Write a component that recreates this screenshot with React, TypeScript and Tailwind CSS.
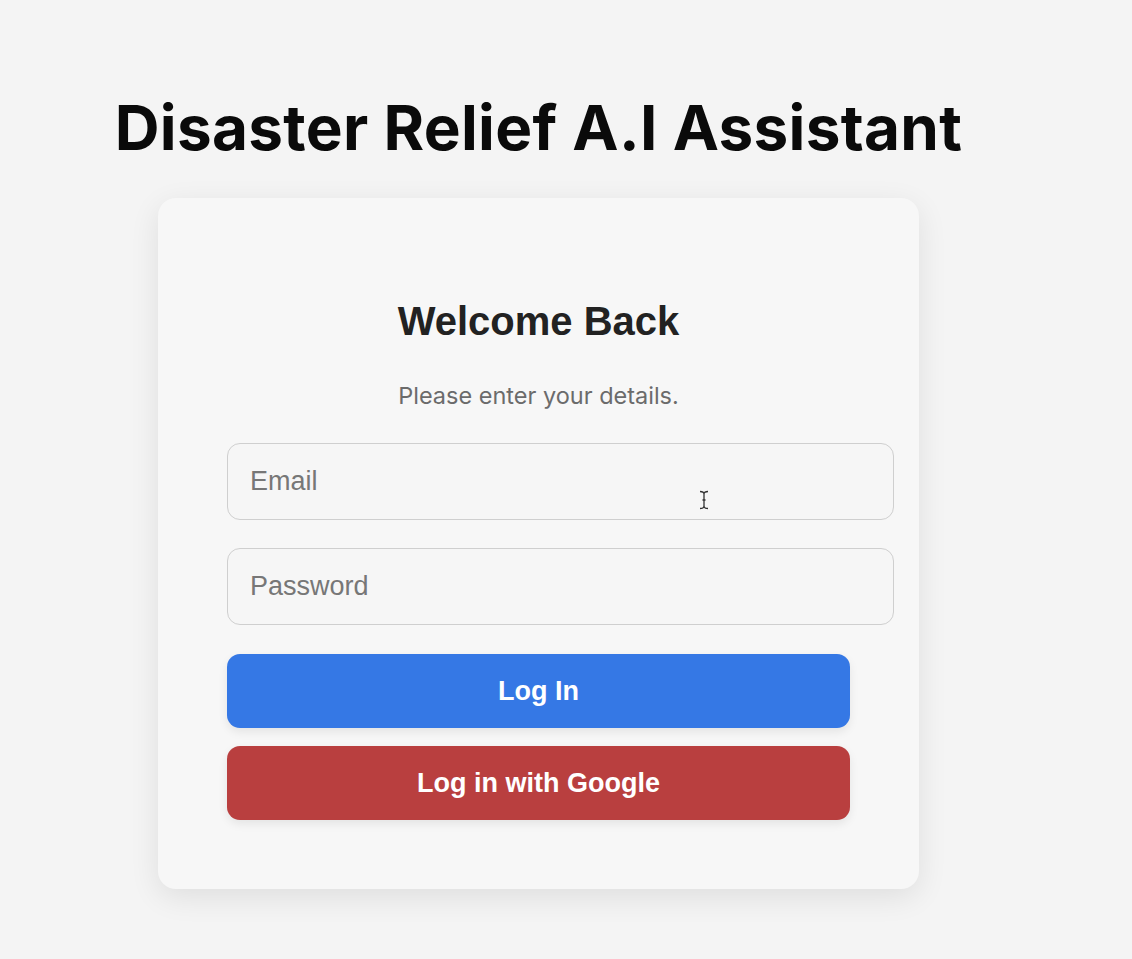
import React from "react";

export default function App() {
  return (
    <div className="min-h-[959px] w-full bg-[#f4f4f4]">
      <div className="flex w-[1077px] flex-col items-center pt-[88px]">
        <h1 className="font-['Inter',sans-serif] text-[62px] font-bold leading-[80px] tracking-[0.3px] text-[#0a0a0a]">
          Disaster Relief A.I Assistant
        </h1>
        <div className="relative mt-[30px] flex w-[761px] flex-col rounded-[18px] bg-[#f7f7f7] px-[69px] pb-[69px] pt-[100px] shadow-[0_8px_30px_rgba(0,0,0,0.09)]">
          <h2 className="text-center font-['Liberation_Sans',Arial,sans-serif] text-[40px] font-bold leading-[46px] text-[#222222]">
            Welcome Back
          </h2>
          <p className="mt-[37px] text-center font-['Inter',sans-serif] text-[23.5px] leading-[30px] text-[#6b6b6b]">
            Please enter your details.
          </p>
          <div className="mt-[32px] flex flex-col gap-[28px]">
            <input
              placeholder="Email"
              className="box-content h-[31px] w-[621px] rounded-[13px] border border-[#cfcfcf] bg-[#f6f6f6] px-[22px] py-[22px] font-['Liberation_Sans',Arial,sans-serif] text-[27px] text-[#333] outline-none placeholder:text-[#777]"
            />
            <input
              placeholder="Password"
              type="password"
              className="box-content h-[31px] w-[621px] rounded-[13px] border border-[#cfcfcf] bg-[#f6f6f6] px-[22px] py-[22px] font-['Liberation_Sans',Arial,sans-serif] text-[27px] text-[#333] outline-none placeholder:text-[#777]"
            />
          </div>
          <button className="mt-[29px] h-[74px] w-full rounded-[13px] bg-[#3578e5] font-['Liberation_Sans',Arial,sans-serif] text-[27px] font-bold text-white shadow-[0_4px_10px_rgba(0,0,0,0.08)]">
            Log In
          </button>
          <button className="mt-[18px] h-[74px] w-full rounded-[13px] bg-[#b93f3f] font-['Liberation_Sans',Arial,sans-serif] text-[27px] font-bold text-white shadow-[0_4px_10px_rgba(0,0,0,0.08)]">
            Log in with Google
          </button>
          <svg
            className="pointer-events-none absolute left-[541px] top-[292px]"
            width="10"
            height="20"
            viewBox="0 0 10 20"
          >
            <path
              d="M1 1.5 Q5 1.5 5 4 L5 16 Q5 18.5 1 18.5 M9 1.5 Q5 1.5 5 4 M5 16 Q5 18.5 9 18.5 M3.5 10 L6.5 10"
              fill="none"
              stroke="#333"
              strokeWidth="1.3"
            />
          </svg>
        </div>
      </div>
    </div>
  );
}
